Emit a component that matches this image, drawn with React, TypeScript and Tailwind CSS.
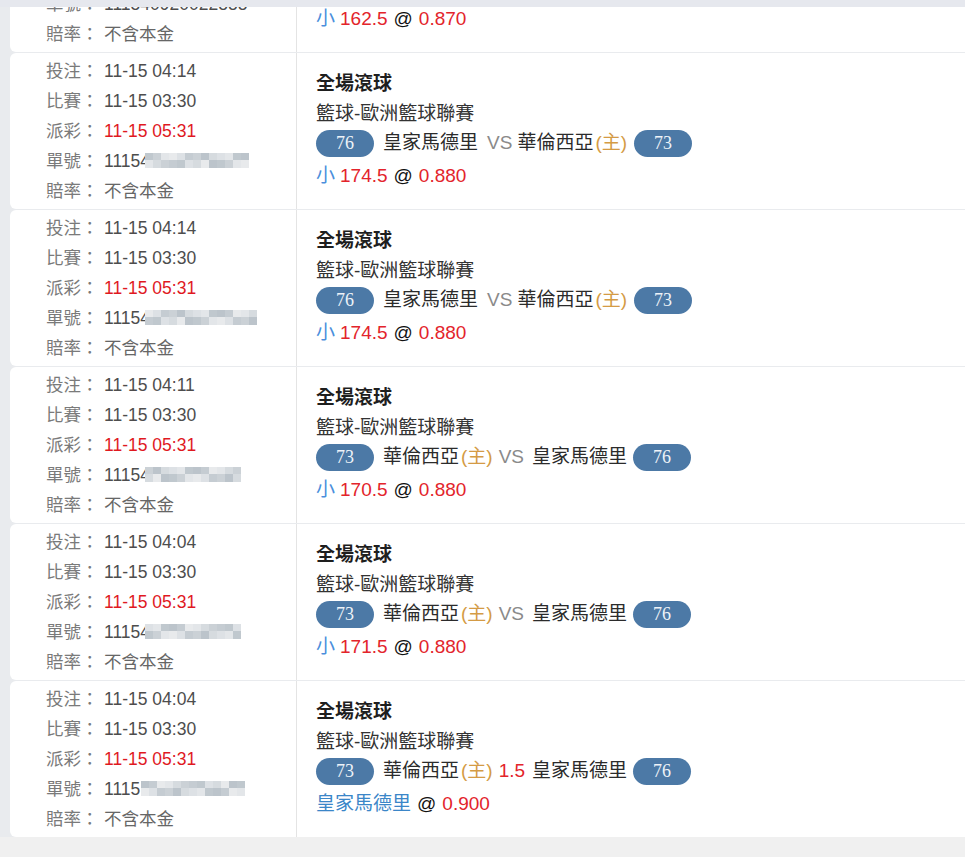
import React from "react";

const palette = [
  "bg-[#d6dbdf]",
  "bg-[#c5ccd2]",
  "bg-[#e3e6e9]",
  "bg-[#bcc4cb]",
  "bg-[#dde1e5]",
  "bg-[#cbd1d6]",
  "bg-[#e8eaec]",
  "bg-[#c0c8ce]",
];

function Blur({ cols, seed, overlap }: { cols: number; seed: number; overlap?: boolean }) {
  const columns = Array.from({ length: cols }, (_, i) => i);
  return (
    <span
      className={
        "relative -top-[1px] inline-flex flex-col " + (overlap ? "ml-[-5px]" : "ml-[1px]")
      }
    >
      {[0, 1].map((r) => (
        <span key={r} className={"flex " + (r === 0 ? "h-[7px]" : "h-[8px]")}>
          {columns.map((c) => (
            <span
              key={c}
              className={"w-[8px] h-full " + palette[(c * 5 + r * 3 + seed * 7 + ((c * c) % 3)) % palette.length]}
            />
          ))}
        </span>
      ))}
    </span>
  );
}

function Badge({ n, className = "" }: { n: string; className?: string }) {
  return (
    <span
      className={
        "inline-flex shrink-0 items-center justify-center w-[58px] h-[27px] rounded-full bg-[#4c79a6] text-[#eef3f8] font-['Liberation_Serif',serif] text-[18px] leading-none " +
        className
      }
    >
      {n}
    </span>
  );
}

type RowData = {
  bet: string;
  match: string;
  payout: string;
  idNode: React.ReactNode;
  left: string;
  right: string;
  teams: React.ReactNode;
  odds: React.ReactNode;
};

const Orange = () => <span className="text-[#d49b45] pl-[2px] pr-[1px]">(主)</span>;
const Red = ({ children }: { children: React.ReactNode }) => (
  <span className="text-[#e3242b]">{children}</span>
);

const madridVsValencia = (
  <span className="flex items-center">
    <span>皇家馬德里</span>
    <span className="text-[#8a8a8a] ml-[9px] mr-[5px]">VS</span>
    <span>華倫西亞</span>
    <Orange />
  </span>
);
const valenciaVsMadrid = (
  <span className="flex items-center">
    <span>華倫西亞</span>
    <Orange />
    <span className="text-[#8a8a8a] ml-[5px] mr-[8px]">VS</span>
    <span>皇家馬德里</span>
  </span>
);

const At = () => <span className="text-[#111111] mx-[6px]">@</span>;

const smallOdds = (line: string, odd: string) => (
  <span className="flex items-center">
    <span className="text-[#4a8fdc] mr-[5px]">小</span>
    <Red>{line}</Red>
    <At />
    <Red>{odd}</Red>
  </span>
);

const rows: RowData[] = [
  {
    bet: "11-15 04:20",
    match: "11-15 03:30",
    payout: "11-15 05:31",
    idNode: <span>111540920022888</span>,
    left: "76",
    right: "73",
    teams: madridVsValencia,
    odds: smallOdds("162.5", "0.870"),
  },
  {
    bet: "11-15 04:14",
    match: "11-15 03:30",
    payout: "11-15 05:31",
    idNode: (
      <span className="inline-flex items-center">
        11154
        <Blur cols={13} seed={1} overlap />
      </span>
    ),
    left: "76",
    right: "73",
    teams: madridVsValencia,
    odds: smallOdds("174.5", "0.880"),
  },
  {
    bet: "11-15 04:14",
    match: "11-15 03:30",
    payout: "11-15 05:31",
    idNode: (
      <span className="inline-flex items-center">
        11154
        <Blur cols={14} seed={2} overlap />
      </span>
    ),
    left: "76",
    right: "73",
    teams: madridVsValencia,
    odds: smallOdds("174.5", "0.880"),
  },
  {
    bet: "11-15 04:11",
    match: "11-15 03:30",
    payout: "11-15 05:31",
    idNode: (
      <span className="inline-flex items-center">
        11154
        <Blur cols={12} seed={3} overlap />
      </span>
    ),
    left: "73",
    right: "76",
    teams: valenciaVsMadrid,
    odds: smallOdds("170.5", "0.880"),
  },
  {
    bet: "11-15 04:04",
    match: "11-15 03:30",
    payout: "11-15 05:31",
    idNode: (
      <span className="inline-flex items-center">
        11154
        <Blur cols={12} seed={4} overlap />
      </span>
    ),
    left: "73",
    right: "76",
    teams: valenciaVsMadrid,
    odds: smallOdds("171.5", "0.880"),
  },
  {
    bet: "11-15 04:04",
    match: "11-15 03:30",
    payout: "11-15 05:31",
    idNode: (
      <span className="inline-flex items-center">
        1115
        <Blur cols={13} seed={5} />
      </span>
    ),
    left: "73",
    right: "76",
    teams: (
      <span className="flex items-center">
        <span>華倫西亞</span>
        <Orange />
        <span className="text-[#e3242b] ml-[5px] mr-[7px]">1.5</span>
        <span>皇家馬德里</span>
      </span>
    ),
    odds: (
      <span className="flex items-center">
        <span className="text-[#3b86c8]">皇家馬德里</span>
        <At />
        <Red>0.900</Red>
      </span>
    ),
  },
];

function InfoLine({ label, children, valueClass }: { label: string; children: React.ReactNode; valueClass: string }) {
  return (
    <div className="flex items-center h-[30px] whitespace-nowrap">
      <span className="w-[58px] shrink-0 text-[#7a7a7a]">{label}</span>
      <span className={valueClass}>{children}</span>
    </div>
  );
}

function Row({ r }: { r: RowData }) {
  return (
    <div className="flex bg-white rounded-l-[6px] h-[156px]">
      <div className="w-[287px] shrink-0 border-r border-[#e4e4e4] pl-[36px] pt-[3px] text-[17.5px]">
        <InfoLine label="投注：" valueClass="text-[#4d4d4d]">{r.bet}</InfoLine>
        <InfoLine label="比賽：" valueClass="text-[#4d4d4d]">{r.match}</InfoLine>
        <InfoLine label="派彩：" valueClass="text-[#e0191f]">{r.payout}</InfoLine>
        <InfoLine label="單號：" valueClass="text-[#4d4d4d]">{r.idNode}</InfoLine>
        <InfoLine label="賠率：" valueClass="text-[#666666]">不含本金</InfoLine>
      </div>
      <div className="flex-1 pl-[19px] pt-[16px] text-[19px] whitespace-nowrap">
        <div className="h-[30px] flex items-center font-bold text-[#1e1e1e]">全場滾球</div>
        <div className="h-[30px] flex items-center text-[#333333]">籃球-歐洲籃球聯賽</div>
        <div className="h-[28px] flex items-center text-[#2b2b2b]">
          <Badge n={r.left} className="mr-[9px]" />
          {r.teams}
          <Badge n={r.right} className="ml-[6px]" />
        </div>
        <div className="h-[38px] flex items-center">{r.odds}</div>
      </div>
    </div>
  );
}

export default function App() {
  return (
    <div className="relative h-[857px] w-full overflow-hidden bg-[#f0f0f0] font-['Liberation_Sans','Noto_Sans_CJK_TC',sans-serif]">
      <div className="mt-[-104px] flex flex-col gap-px bg-[#e9ebee] pl-[10px]">
        {rows.map((r, i) => (
          <Row key={i} r={r} />
        ))}
      </div>
      <div className="absolute top-0 left-0 right-0 h-[7px] bg-[#e6e8ee]" />
    </div>
  );
}
